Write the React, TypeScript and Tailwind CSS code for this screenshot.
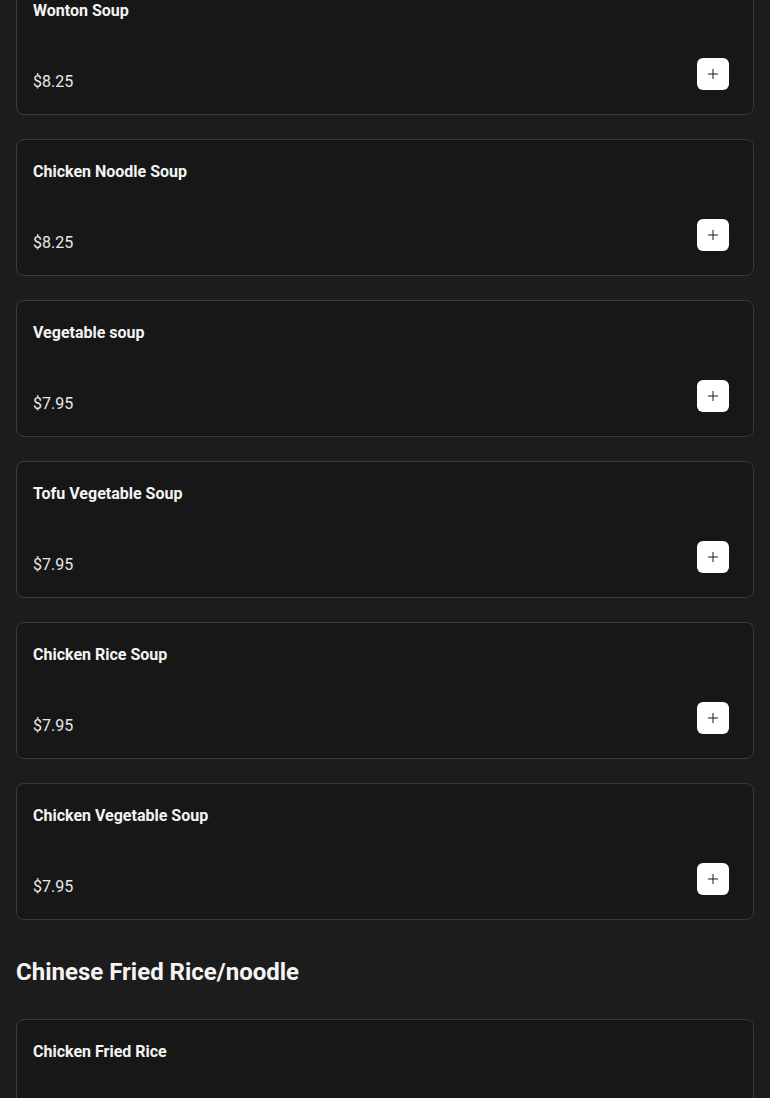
import { Plus } from 'lucide-react';

type Item = { name: string; price: string };

const soups: Item[] = [
  { name: 'Wonton Soup', price: '$8.25' },
  { name: 'Chicken Noodle Soup', price: '$8.25' },
  { name: 'Vegetable soup', price: '$7.95' },
  { name: 'Tofu Vegetable Soup', price: '$7.95' },
  { name: 'Chicken Rice Soup', price: '$7.95' },
  { name: 'Chicken Vegetable Soup', price: '$7.95' },
];

const friedRice: Item[] = [
  { name: 'Chicken Fried Rice', price: '$9.95' },
  { name: 'Beef Fried Rice', price: '$10.95' },
];

const MenuCard = ({ item }: { item: Item }) => {
  return (
    <div className="rounded-lg border border-[#3a3a3a] bg-[#171717] px-4 py-5">
      <h3 className="text-base leading-6 font-bold text-[#f4f4f4]">{item.name}</h3>
      <div className="mt-[47px] flex h-6 items-start justify-between">
        <p className="text-base leading-6 text-[#e8e8e8]">{item.price}</p>
        <button className="mr-2 -mt-[12px] flex h-8 w-8 shrink-0 items-center justify-center rounded-md bg-white text-[#1a1a1a]">
          <Plus size={16} strokeWidth={1.5} />
        </button>
      </div>
    </div>
  );
};

const App = () => {
  return (
    <div
      className="min-h-screen overflow-hidden bg-[#1c1c1c] px-4"
      style={{ fontFamily: 'Roboto, "Liberation Sans", sans-serif' }}
    >
      <div className="-mt-[22px] flex flex-col gap-6">
        {soups.map((item) => (
          <MenuCard key={item.name} item={item} />
        ))}
      </div>

      <h2 className="pt-9 pb-[31px] text-2xl leading-8 font-bold text-[#f4f4f4]">Chinese Fried Rice/noodle</h2>

      <div className="flex flex-col gap-6 pb-6">
        {friedRice.map((item) => (
          <MenuCard key={item.name} item={item} />
        ))}
      </div>
    </div>
  );
};

export default App;
